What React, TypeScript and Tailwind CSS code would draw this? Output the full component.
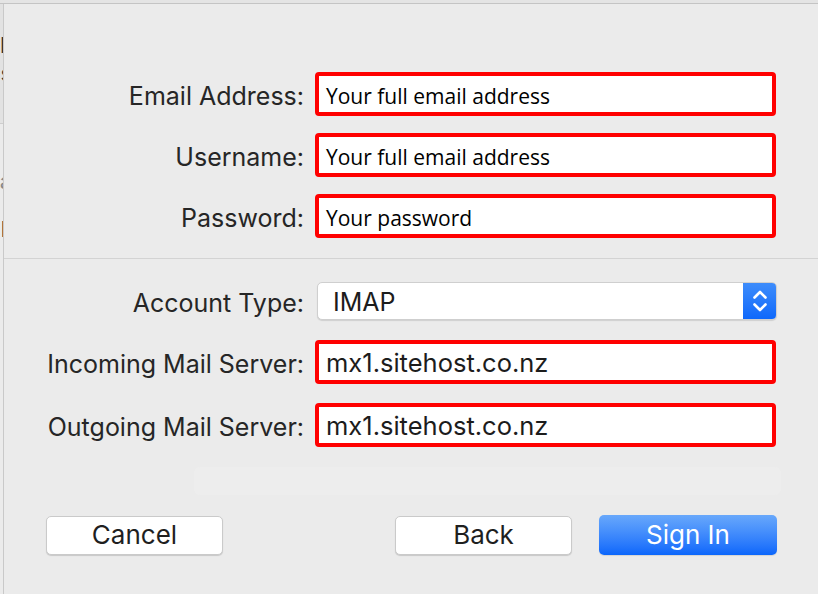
import { FC } from 'react';

const labelFont = { fontFamily: 'Inter, "Liberation Sans", sans-serif' };

interface FieldProps {
  label: string;
  value: string;
  alt?: boolean;
}

const Field: FC<FieldProps> = ({ label, value, alt }) => (
  <div className="grid grid-cols-[300px_461px] gap-x-[11px] items-center">
    <span className="text-right text-[25px] leading-[30px] text-[#262626] pt-[3px]">{label}</span>
    <div className="h-[44px] bg-white border-[4px] border-[#ff0000] rounded-[4px] flex items-center pl-[7px]">
      <span
        className={alt ? 'text-[25.5px] leading-[30px] text-[#1c1c1c] pt-[1px]' : 'text-[21px] leading-[30px] text-black pt-[3px]'}
        style={alt ? undefined : { fontFamily: '"Open Sans", sans-serif' }}
      >
        {value}
      </span>
    </div>
  </div>
);

const Chevrons: FC = () => (
  <svg width="18" height="28" viewBox="0 0 18 28" fill="none" stroke="white" strokeWidth="2.6" strokeLinecap="round" strokeLinejoin="round">
    <path d="M3.5 10.5 L9 5 L14.5 10.5" />
    <path d="M3.5 17.5 L9 23 L14.5 17.5" />
  </svg>
);

const App: FC = () => {
  return (
    <div className="w-[818px] h-[594px] bg-[#ebebeb] flex flex-col overflow-hidden" style={labelFont}>
      <div className="h-[3px] bg-[#e4e4e4] border-b border-[#c4c4c4] box-content" />
      <div className="flex flex-1">
        {/* sliver of the sidebar behind the sheet */}
        <div className="w-[3px] border-r border-[#c9c9c9] box-content flex flex-col overflow-hidden">
          <div className="h-[120px] bg-[#e2e2e2] border-b border-[#cdcdcd] flex flex-col items-end overflow-hidden">
            <span className="mt-[30px] mr-[-9px] text-[22px] leading-none text-[#333]">k</span>
            <span className="mt-[6px] mr-[-9px] text-[22px] leading-none text-[#333]">s</span>
          </div>
          <div className="flex flex-col items-end">
            <span className="mt-[46px] mr-[-9px] text-[22px] leading-none text-[#888]">a</span>
            <span className="mt-[26px] mr-[-3px] text-[22px] leading-none text-[#222]">l</span>
          </div>
        </div>

        <div className="flex-1 flex flex-col">
          <div className="pt-[68px] flex flex-col gap-[17px]">
            <Field label="Email Address:" value="Your full email address" />
            <Field label="Username:" value="Your full email address" />
            <Field label="Password:" value="Your password" />
          </div>

          <div className="mt-[20px] h-px bg-[#d3d3d3]" />

          <div className="mt-[23px] grid grid-cols-[300px_460px] gap-x-[13px] items-center">
            <span className="text-right text-[25px] leading-[30px] text-[#262626] pt-[3px]">Account Type:</span>
            <div className="h-[38px] bg-white rounded-[5px] border border-[#cfcfcf] shadow-[0_1px_1px_rgba(0,0,0,0.12)] flex overflow-hidden">
              <span className="flex-1 flex items-center pl-[15px] pt-[1px] text-[25px] leading-[30px] text-[#1c1c1c]">IMAP</span>
              <div className="w-[33px] bg-gradient-to-b from-[#3d8cfb] to-[#0d68fb] flex items-center justify-center">
                <Chevrons />
              </div>
            </div>
          </div>

          <div className="mt-[20px] flex flex-col gap-[19px]">
            <Field label="Incoming Mail Server:" value="mx1.sitehost.co.nz" alt />
            <Field label="Outgoing Mail Server:" value="mx1.sitehost.co.nz" alt />
          </div>

          <div className="mt-[20px] ml-[190px] mr-[37px] h-[28px] rounded-[6px] bg-[#ededed]" />

          <div className="mt-[20px] flex items-center pl-[42px]">
            <button className="w-[177px] h-[39px] bg-white rounded-[5px] border border-[#cacaca] shadow-[0_1px_1px_rgba(0,0,0,0.15)] text-[26px] leading-[30px] text-[#1f1f1f]">
              Cancel
            </button>
            <button className="ml-[172px] w-[177px] h-[39px] bg-white rounded-[5px] border border-[#cacaca] shadow-[0_1px_1px_rgba(0,0,0,0.15)] text-[26px] leading-[30px] text-[#1f1f1f]">
              Back
            </button>
            <button className="ml-[27px] w-[178px] h-[40px] rounded-[5px] bg-gradient-to-b from-[#68a8fb] to-[#0a66fb] text-[26px] leading-[30px] text-white shadow-[0_1px_1px_rgba(0,0,0,0.1)]">
              Sign In
            </button>
          </div>
        </div>
      </div>
    </div>
  );
};

export default App;
